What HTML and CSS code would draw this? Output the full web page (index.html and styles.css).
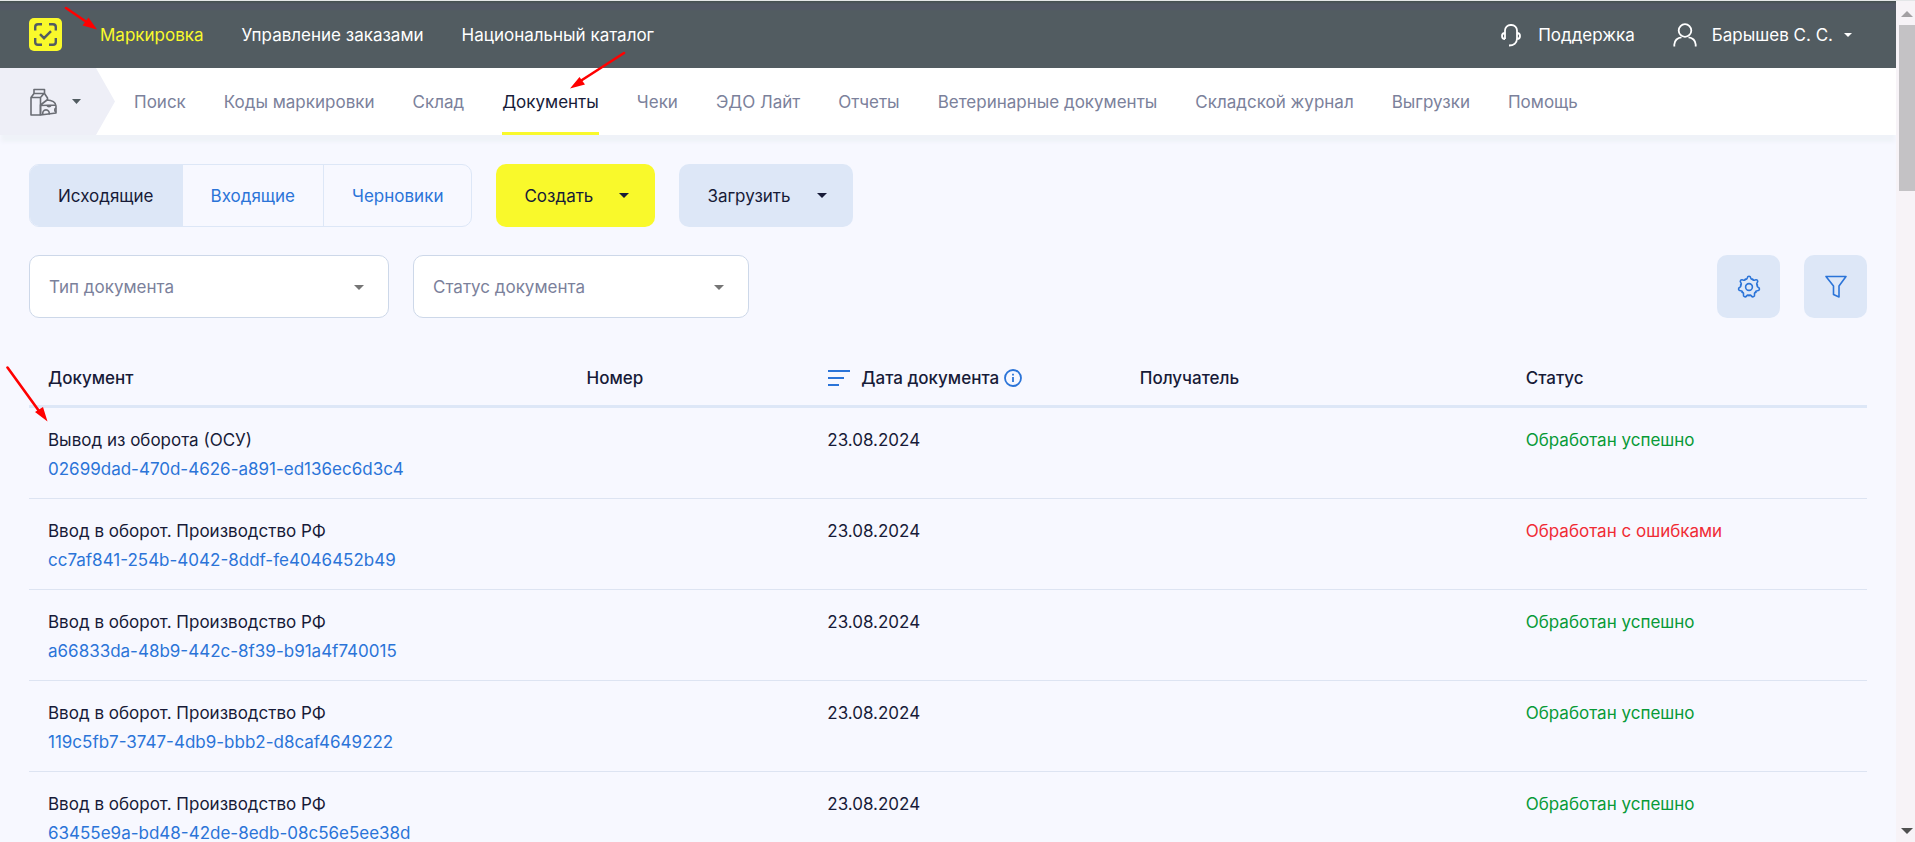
FILE: index.html
```html
<!DOCTYPE html>
<html lang="ru">
<head>
<meta charset="utf-8">
<title>Маркировка — Документы</title>
<link rel="stylesheet" href="styles.css">
</head>
<body>
<div class="page">
  <header class="topbar">
    <a class="logo" href="#" aria-label="Главная">
      <svg width="33" height="33" viewBox="0 0 33 33" fill="none" stroke="#525c61" stroke-width="2.4">
        <rect width="33" height="33" rx="5" fill="#f9f92b" stroke="none"/>
        <path d="M6.200 12.500V9a2.800 2.800 0 0 1 2.800-2.800h4M20 6.200h4A2.800 2.800 0 0 1 26.800 9v3.500M26.800 20v4a2.800 2.800 0 0 1-2.800 2.800H20M13 26.800H9A2.800 2.800 0 0 1 6.200 24v-4M11 16.200l4 4 7-7"/>
      </svg>
    </a>
    <nav class="topnav">
      <a class="current" href="#">Маркировка</a>
      <a href="#">Управление заказами</a>
      <a href="#">Национальный каталог</a>
    </nav>
    <div class="account">
      <a class="account-item" href="#">
        <svg width="24" height="24" viewBox="0 0 24 24" fill="none" stroke="#fff" stroke-width="1.800">
          <path d="M6 16V7.500A5.500 5.500 0 0 1 11.500 2h1A5.500 5.500 0 0 1 18 7.500V16M6 10a3 3 0 0 0 0 6M18 10a3 3 0 0 1 0 6M18 15.500c0 4.500-3.500 7-8 7"/>
        </svg>
        Поддержка
      </a>
      <button class="account-item" type="button">
        <svg width="24" height="24" viewBox="0 0 24 24" fill="none" stroke="#fff" stroke-width="1.800">
          <circle cx="12" cy="7.500" r="6.300"/><path d="M1.300 23.500v-2a7.500 7.500 0 0 1 7.200-7.200M15.500 14.300a7.500 7.500 0 0 1 7.200 7.200v2"/>
        </svg>
        Барышев С. С.
        <svg class="user-caret" width="8" height="4" viewBox="0 0 8 4"><path d="M0 0h8L4 4z" fill="#fff"/></svg>
      </button>
    </div>
  </header>

  <div class="subbar">
    <button class="category" type="button" aria-label="Товарная группа">
      <svg width="28" height="28" viewBox="0 0 28 28" fill="none" stroke="#6a6d74" stroke-width="1.600" stroke-linejoin="round">
        <path d="M5 1.500h10.500v4H5zM5 5.500L2 9.500v17.500h9.500M15.500 5.500l3 4.500v2M2 9.500h9.500l3.500-4M11.500 9.500v17.500"/>
        <path d="M11.500 17l6.500-5c5 0 9 2.500 9 6v7L11.500 27zM11.500 17.500L27 17"/>
        <path d="M14 26.500a3.300 3.300 0 1 1 6 0M27 20a2.200 2.200 0 0 0 0 4M18 17.500a2.200 2.200 0 0 0 4 0"/>
      </svg>
      <svg width="9" height="5" viewBox="0 0 9 5"><path d="M0 0h9L4.500 5z" fill="#525c61"/></svg>
    </button>
    <nav class="subnav">
      <a href="#">Поиск</a>
      <a href="#">Коды маркировки</a>
      <a href="#">Склад</a>
      <a class="current" href="#">Документы</a>
      <a href="#">Чеки</a>
      <a href="#">ЭДО Лайт</a>
      <a href="#">Отчеты</a>
      <a href="#">Ветеринарные документы</a>
      <a href="#">Складской журнал</a>
      <a href="#">Выгрузки</a>
      <a href="#">Помощь</a>
    </nav>
  </div>

  <main class="content">
    <div class="toolbar">
      <div class="tabs">
        <button class="tab current" type="button">Исходящие</button>
        <button class="tab" type="button">Входящие</button>
        <button class="tab" type="button">Черновики</button>
      </div>
      <button class="action primary" type="button">Создать
        <svg width="10" height="5" viewBox="0 0 10 5"><path d="M0 0h10L5 5z" fill="#171b38"/></svg>
      </button>
      <button class="action" type="button">Загрузить
        <svg width="10" height="5" viewBox="0 0 10 5"><path d="M0 0h10L5 5z" fill="#171b38"/></svg>
      </button>
    </div>

    <div class="filters">
      <div class="field wide">
        <select aria-label="Тип документа"><option>Тип документа</option></select>
        <svg class="field-caret" width="10" height="5" viewBox="0 0 10 5"><path d="M0 0h10L5 5z" fill="#757575"/></svg>
      </div>
      <div class="field">
        <select aria-label="Статус документа"><option>Статус документа</option></select>
        <svg class="field-caret" width="10" height="5" viewBox="0 0 10 5"><path d="M0 0h10L5 5z" fill="#757575"/></svg>
      </div>
      <div class="filter-buttons">
        <button class="square" type="button" aria-label="Настройки">
          <svg width="24" height="24" viewBox="0 0 24 24" fill="none" stroke="#2b74d8" stroke-width="1.600" stroke-linecap="round">
            <defs><path id="tooth" d="M8.270 4.250C9.200 4.700 9.900 4 10.200 3C10.600 1.500 11 1.300 12 1.300C13 1.300 13.400 1.500 13.800 3C14.100 4 14.800 4.700 15.730 4.250"/></defs>
            <use href="#tooth"/>
            <use href="#tooth" transform="rotate(51.43 12 12)"/>
            <use href="#tooth" transform="rotate(102.86 12 12)"/>
            <use href="#tooth" transform="rotate(154.29 12 12)"/>
            <use href="#tooth" transform="rotate(205.71 12 12)"/>
            <use href="#tooth" transform="rotate(257.14 12 12)"/>
            <use href="#tooth" transform="rotate(308.57 12 12)"/>
            <circle cx="12" cy="12" r="3.400"/>
          </svg>
        </button>
        <button class="square" type="button" aria-label="Фильтр">
          <svg width="24" height="24" viewBox="0 0 24 24" fill="none" stroke="#2b74d8" stroke-width="1.600" stroke-linejoin="round">
            <path d="M2 1.500h20l-7 9.500v11l-5.500-2.500V11z"/>
          </svg>
        </button>
      </div>
    </div>

    <table class="documents">
      <colgroup><col class="c-doc"><col class="c-num"><col class="c-date"><col class="c-to"><col></colgroup>
      <thead>
        <tr>
          <th>Документ</th>
          <th>Номер</th>
          <th>
            <div class="sort-head">
              <svg width="24" height="18" viewBox="0 0 24 18" stroke="#2b74d8" stroke-width="2"><path d="M1 2h22M1 9h16M1 16h11"/></svg>
              <span>Дата документа</span>
              <svg width="18" height="18" viewBox="0 0 18 18" fill="none" stroke="#2b74d8" stroke-width="1.800"><circle cx="9" cy="9" r="8"/><path d="M9 8v5M9 4.800v1.800"/></svg>
            </div>
          </th>
          <th>Получатель</th>
          <th>Статус</th>
        </tr>
      </thead>
      <tbody>
        <tr><td>Вывод из оборота (ОСУ)<a href="#">02699dad-470d-4626-a891-ed136ec6d3c4</a></td><td></td><td>23.08.2024</td><td></td><td class="ok">Обработан успешно</td></tr>
        <tr><td>Ввод в оборот. Производство РФ<a href="#">cc7af841-254b-4042-8ddf-fe4046452b49</a></td><td></td><td>23.08.2024</td><td></td><td class="error">Обработан с ошибками</td></tr>
        <tr><td>Ввод в оборот. Производство РФ<a href="#">a66833da-48b9-442c-8f39-b91a4f740015</a></td><td></td><td>23.08.2024</td><td></td><td class="ok">Обработан успешно</td></tr>
        <tr><td>Ввод в оборот. Производство РФ<a href="#">119c5fb7-3747-4db9-bbb2-d8caf4649222</a></td><td></td><td>23.08.2024</td><td></td><td class="ok">Обработан успешно</td></tr>
        <tr><td>Ввод в оборот. Производство РФ<a href="#">63455e9a-bd48-42de-8edb-08c56e5ee38d</a></td><td></td><td>23.08.2024</td><td></td><td class="ok">Обработан успешно</td></tr>
      </tbody>
    </table>
  </main>
</div>

<div class="scrollbar" aria-hidden="true">
  <svg width="12" height="6" viewBox="0 0 12 6"><path d="M0 6h12L6 0z" fill="#a3a0a3"/></svg>
  <div class="thumb"></div>
  <svg class="down" width="12" height="6" viewBox="0 0 12 6"><path d="M0 0h12L6 6z" fill="#505050"/></svg>
</div>

<svg class="pointers" width="640" height="430" viewBox="0 0 640 430" aria-hidden="true">
  <g stroke="#f00" stroke-width="2.600" stroke-linecap="round"><path d="M66 8L88 23M624 53L582 80M7.500 367.500L39 411"/></g>
  <g fill="#f00"><path d="M97 29.500L82.500 25.500L88.500 17.500zM570 88.500L579.500 77L585 84.500zM47.500 421.500L35 412L43 407z"/></g>
</svg>
</body>
</html>
```
FILE: styles.css
```css
* { box-sizing: border-box; }

body {
  margin: 0;
  height: 100vh;
  display: flex;
  overflow: hidden;
  border-top: 1px solid #e4e6e8;
  background: #f7f8ff;
  color: #171b38;
  font: 17px/28px Inter, "Noto Sans", sans-serif;
}

a { color: inherit; text-decoration: none; }
button, select { font: inherit; color: inherit; border: 0; background: none; padding: 0; margin: 0; }
svg { display: block; flex: none; }

.page { flex: 1; min-width: 0; }

.topbar {
  display: flex;
  align-items: center;
  height: 67px;
  padding: 0 44px 0 29px;
  background: linear-gradient(#45504f 0, #525865 3px, #525865 8px, #525c61 10px);
  color: #fff;
}
.topnav { display: flex; gap: 38px; margin-left: 38px; }
.topnav .current { color: #f9f92b; }
.account { display: flex; gap: 38px; margin-left: auto; }
.account-item { display: flex; align-items: center; gap: 15px; }
.user-caret { margin-left: -4px; }

.subbar {
  display: flex;
  height: 67px;
  background: #fff;
  box-shadow: 0 8px 4px -1px #eff2f8;
}
.category {
  display: flex;
  align-items: center;
  gap: 15px;
  width: 115px;
  padding-left: 29px;
  background: #eeeff7;
  clip-path: polygon(0 0, 96px 0, 100% 50%, 96px 100%, 0 100%);
}
.subnav { display: flex; gap: 38px; margin-left: 19px; color: #7b819b; white-space: nowrap; }
.subnav a { display: flex; align-items: center; border-bottom: 3px solid transparent; padding-top: 3px; }
.subnav .current { color: #171b38; border-color: #f9f92b; }

.content { padding: 29px 29px 0; }

.toolbar { display: flex; gap: 24px; }
.tabs { display: flex; height: 63px; border: 1px solid #dde7f7; border-radius: 10px; overflow: hidden; }
.tab { padding: 0 28px; color: #2b74d8; }
.tab + .tab { border-left: 1px solid #dde7f7; }
.tab.current { background: #dde7f7; color: #171b38; }
.action {
  display: flex;
  align-items: center;
  gap: 26px;
  height: 63px;
  padding: 0 26px 0 28px;
  border-radius: 10px;
  background: #dde7f7;
}
.primary { background: #f9f92b; }

.filters { display: flex; gap: 24px; margin-top: 28px; }
.field { position: relative; width: 336px; }
.field.wide { width: 360px; }
.field select {
  appearance: none;
  width: 100%;
  height: 63px;
  padding: 0 19px;
  border: 1px solid #cdd8e9;
  border-radius: 10px;
  background: #fff;
  color: #7b819b;
}
.field-caret { position: absolute; right: 25px; top: 30px; pointer-events: none; }
.filter-buttons { display: flex; gap: 24px; margin-left: auto; }
.square { display: grid; place-items: center; width: 63px; height: 63px; border-radius: 10px; background: #dde7f7; }

.documents { width: 100%; margin-top: 32px; border-collapse: separate; border-spacing: 0; table-layout: fixed; }
.c-doc { width: 29.3%; }
.c-num { width: 13.1%; }
.c-date { width: 17%; }
.c-to { width: 21%; }
.documents th { padding: 14px 19px 13px; text-align: left; font-weight: 500; border-bottom: 3px solid #dde7f7; }
.documents td { padding: 18px 19px 15px; vertical-align: top; border-bottom: 1px solid #dde4f2; }
.documents td a { display: block; margin-top: 1px; color: #2b74d8; }
.sort-head { display: flex; align-items: center; gap: 5px; }
.sort-head span { margin-left: 5px; }
.ok { color: #089a37; }
.error { color: #f02b35; }

.scrollbar {
  display: flex;
  flex-direction: column;
  align-items: center;
  width: 19px;
  padding: 10px 0 8px 3px;
  background: #f7f3f7;
}
.thumb { align-self: stretch; height: 166px; margin-top: 8px; background: #c4c2c5; }
.down { margin-top: auto; }

.pointers { position: absolute; left: 0; top: 0; pointer-events: none; }
```
